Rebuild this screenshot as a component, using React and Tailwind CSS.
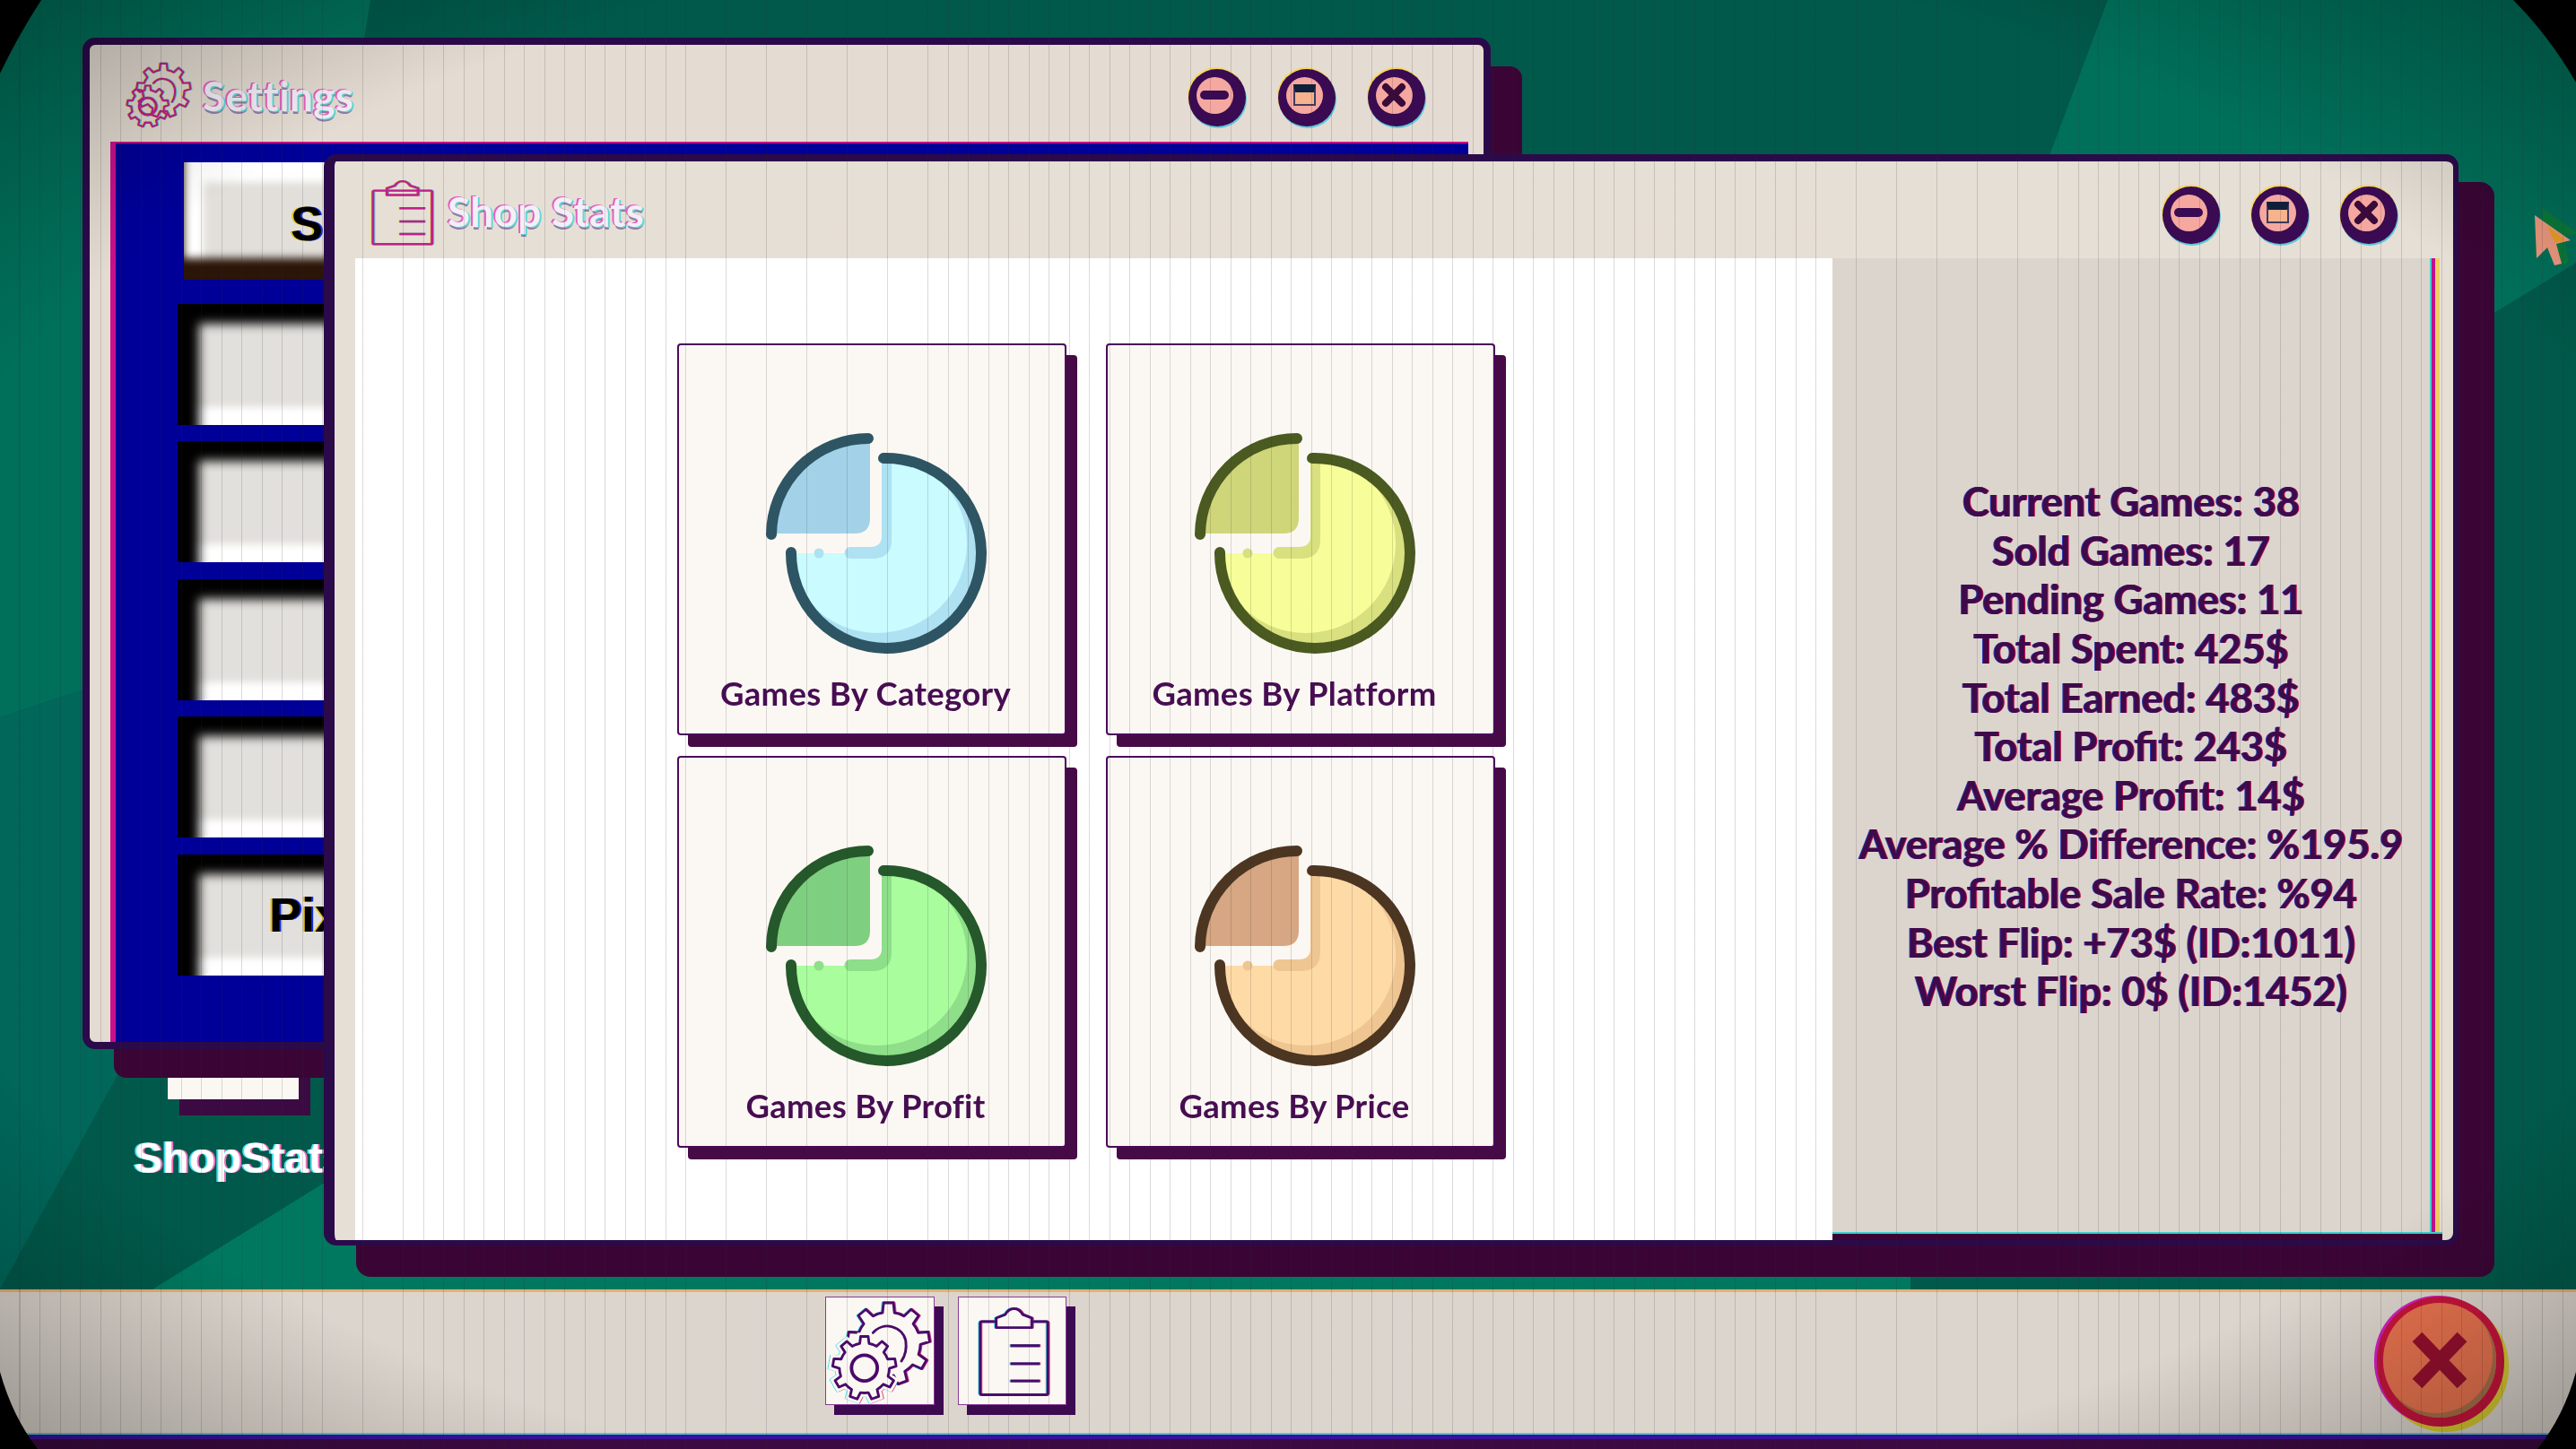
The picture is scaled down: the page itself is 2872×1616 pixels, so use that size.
const stats = [
  "Current Games: 38",
  "Sold Games: 17",
  "Pending Games: 11",
  "Total Spent: 425$",
  "Total Earned: 483$",
  "Total Profit: 243$",
  "Average Profit: 14$",
  "Average % Difference: %195.9",
  "Profitable Sale Rate: %94",
  "Best Flip: +73$ (ID:1011)",
  "Worst Flip: 0$ (ID:1452)",
];

const cards = [
  { id: "cat", label: "Games By Category", stroke: "#2e5564", light: "#c9fbff", shade: "#aee1f2", slice: "#a3d2e8" },
  { id: "plat", label: "Games By Platform", stroke: "#4a5a20", light: "#f7fd98", shade: "#d8e07f", slice: "#cfd67a" },
  { id: "prof", label: "Games By Profit", stroke: "#25582a", light: "#a9fd9d", shade: "#8ede8a", slice: "#7fcf80" },
  { id: "price", label: "Games By Price", stroke: "#4c3622", light: "#fedba6", shade: "#efc692", slice: "#d6a782" },
];

// builds the outline of a cog, used for the settings icons
const gearPath = (cx, cy, outer, inner, teeth) => {
  const pts = [];
  const step = (Math.PI * 2) / teeth;
  for (let i = 0; i < teeth; i++) {
    const a = i * step - Math.PI / 2;
    const list = [
      [inner, a - step * 0.5],
      [inner, a - step * 0.27],
      [outer, a - step * 0.17],
      [outer, a + step * 0.17],
      [inner, a + step * 0.27],
    ];
    list.forEach(([r, t]) => pts.push(`${(cx + r * Math.cos(t)).toFixed(1)} ${(cy + r * Math.sin(t)).toFixed(1)}`));
  }
  return `M${pts.join(" L")} Z`;
};

const PieIcon = ({ id, stroke, light, shade, slice }) => (
  <svg viewBox="0 0 260 260" className="w-[260px] h-[260px] ml-[16px] shrink-0">
    <defs>
      <clipPath id={`sector-${id}`}>
        <path d="M133 31 A106 106 0 1 1 32 137 L133 137 Z" />
      </clipPath>
    </defs>
    <path d="M120 11 V98 Q120 115 103 115 H12 A106 106 0 0 1 120 11 Z" fill={slice} />
    <g clipPath={`url(#sector-${id})`}>
      <circle cx="138" cy="136" r="106" fill={shade} />
      <circle cx="128" cy="126" r="100" fill={light} />
    </g>
    <path d="M133 33 L144 33 V122 Q144 143 122 143 H98 A6.5 6.5 0 0 1 98 130 H120 Q133 130 133 118 Z" fill={shade} />
    <circle cx="63" cy="137" r="5.5" fill={shade} />
    <path d="M135 31 A106 106 0 1 1 32 136" fill="none" stroke={stroke} strokeWidth="12" strokeLinecap="round" />
    <path d="M118 9 A108 108 0 0 0 10 116" fill="none" stroke={stroke} strokeWidth="12" strokeLinecap="round" />
  </svg>
);

const GearIcon = ({ className, stroke = "#4a0a6a", width = 3, fill = "#fbf8f3" }) => (
  <svg viewBox="0 0 120 124" className={className} fill="none">
    <path d={gearPath(70, 54, 48, 37, 9)} stroke={stroke} strokeWidth={width} strokeLinejoin="round" fill={fill} />
    <path d="M52 41 A22 22 0 0 1 90 50 Q92 64 85 74" stroke={stroke} strokeWidth={width} strokeLinecap="round" />
    <path d={gearPath(42, 82, 37, 29, 9)} fill={fill} stroke={fill} strokeWidth="9" />
    <path d={gearPath(42, 82, 37, 29, 9)} stroke={stroke} strokeWidth={width} strokeLinejoin="round" fill={fill} />
    <circle cx="42" cy="82" r="15" stroke={stroke} strokeWidth={width + 1} />
  </svg>
);

const ClipboardIcon = ({ className, stroke = "#4a0a6a", width = 3, fill = "#fbf8f3" }) => (
  <svg
    viewBox="0 0 120 124"
    preserveAspectRatio="none"
    className={className}
    fill="none"
    stroke={stroke}
    strokeWidth={width}
    strokeLinejoin="round"
  >
    <rect x="24" y="28" width="76" height="85" rx="2" />
    <path d="M42 35 V24 L52 20 Q56 13 62 13 Q68 13 72 20 L82 24 V35 Z" fill={fill} />
    <path d="M58 56 H91 M58 77 H91 M58 97 H91" />
  </svg>
);

const WinButton = ({ kind }) => (
  <div className="w-[64px] h-[64px] rounded-full bg-[#3a0a52] flex items-center justify-center pr-[6px] pb-[6px] shadow-[-1px_-2px_0_#f5d860,1px_2px_0_#5fc8d8]">
    <div className="w-[41px] h-[41px] rounded-full bg-[#f5a8a0] flex items-center justify-center">
      {kind === "min" && <div className="w-[32px] h-[10px] rounded-full bg-[#3a0a52]" />}
      {kind === "max" && (
        <div className="w-[25px] h-[24px] border-2 border-[#3f3a60] border-t-[9px] border-t-[#10203a] bg-[#f7b28e]" />
      )}
      {kind === "close" && (
        <svg viewBox="0 0 30 30" className="w-[30px] h-[30px]">
          <path d="M6 6 L24 24 M24 6 L6 24" stroke="#3a0a3a" strokeWidth="8" strokeLinecap="round" />
        </svg>
      )}
    </div>
  </div>
);

const titleText =
  "text-[46px] tracking-[0.3px] font-bold leading-none text-[#f4eff6] [text-shadow:-2px_-1px_0_#e35fc0,2px_1px_0_#62d8d8,1px_3px_0_#8d7fa8]";

const font = "font-['Lato','Liberation_Sans',sans-serif]";

const SettingsRow = ({ text, selected }) => (
  <div
    className={
      selected
        ? "h-[131px] ml-[7px] mb-[8px] shrink-0 bg-[#e2dfda] flex items-center pl-[119px] pt-[5px] shadow-[inset_0_-24px_10px_#2a1508,inset_22px_22px_10px_#ffffff]"
        : "h-[135px] shrink-0 bg-[#e2e0dc] flex items-center pl-[102px] shadow-[inset_24px_22px_12px_#000000,inset_0_-20px_8px_#ffffff]"
    }
  >
    <span className="text-[54px] font-bold leading-none text-black font-['Liberation_Sans',sans-serif] [text-shadow:-2px_0_0_#e8c020,2px_0_0_#1030e0]">
      {text}
    </span>
  </div>
);

const App = () => {
  return (
    <div className={`relative w-[2872px] h-[1616px] overflow-hidden flex flex-col justify-end bg-[#00594a] blur-[0.7px] ${font}`}>
      {/* wallpaper */}
      <svg viewBox="0 0 2872 1616" className="absolute inset-0 w-full h-full">
        <polygon points="0,0 413,0 300,700 0,800" fill="#00705a" />
        <polygon points="0,800 300,700 240,1000 0,1438" fill="#00675a" />
        <polygon points="360,1320 170,1438 2130,1438 2130,1300" fill="#00785f" />
        <polygon points="2350,0 2872,0 2872,293 2779,350 2200,400" fill="#00705a" />
      </svg>

      {/* desktop shortcut behind the windows */}
      <div className="absolute left-[122px] top-[1080px] w-[276px] flex flex-col items-center">
        <div className="w-[146px] h-[146px] bg-[#fbf8f3] shadow-[13px_18px_0_#3c0a42]" />
        <div className="mt-[42px] ml-[16px] text-[48px] font-bold leading-none text-white font-['Liberation_Sans',sans-serif] [text-shadow:-2px_0_0_#40e0f0,2px_0_0_#f070c0]">
          ShopStats
        </div>
      </div>

      {/* settings window */}
      <div className="absolute left-[92px] top-[42px] w-[1570px] h-[1128px] flex flex-col rounded-[14px] border-[8px] border-[#2b0a4a] bg-[#e4dcd2] shadow-[35px_32px_0_#3a0535]">
        <div className="h-[108px] shrink-0 flex items-center pl-[38px] pr-[65px]">
          <GearIcon
            className="w-[76px] h-[78px] mt-[4px] shrink-0 [filter:drop-shadow(-1px_0_0_#e8d860)_drop-shadow(1px_0_0_#50d0d8)]"
            stroke="#c0208c"
            width={3.5}
            fill="none"
          />
          <span className={`ml-[12px] mt-[6px] ${titleText}`}>Settings</span>
          <div className="ml-auto mt-[10px] flex gap-[36px]">
            <WinButton kind="min" />
            <WinButton kind="max" />
            <WinButton kind="close" />
          </div>
        </div>
        <div className="flex-1 ml-[23px] mr-[17px] border-l-[6px] border-t-[2px] border-[#c8108c] bg-[#000098] pt-[21px] pl-[69px] flex flex-col gap-[18.5px] overflow-hidden">
          <SettingsRow text="S" selected />
          <SettingsRow text="" />
          <SettingsRow text="" />
          <SettingsRow text="" />
          <SettingsRow text="" />
          <SettingsRow text="Pix" />
        </div>
      </div>

      {/* shop stats window */}
      <div className="absolute left-[361px] top-[172px] w-[2380px] h-[1217px] flex flex-col rounded-[14px] border-[6px] border-l-[12px] border-t-[8px] border-[#2b0a4a] bg-[#e6dfd5] shadow-[38px_33px_0_2px_#3a0535]">
        <div className="h-[108px] shrink-0 flex items-center pl-[22px] pr-[62px]">
          <ClipboardIcon
            className="w-[104px] h-[87px] mt-[5px] shrink-0 [filter:drop-shadow(-1px_0_0_#e8d860)_drop-shadow(1px_0_0_#50d0d8)]"
            stroke="#c0208c"
            width={3.5}
            fill="none"
          />
          <span className={`mt-[4px] ${titleText}`}>Shop Stats</span>
          <div className="ml-auto mt-[12px] flex gap-[35px]">
            <WinButton kind="min" />
            <WinButton kind="max" />
            <WinButton kind="close" />
          </div>
        </div>
        <div className="flex-1 min-h-0 flex pl-[23px] pr-[26px]">
          <div className="w-[1647px] shrink-0 bg-white pl-[359px] pt-[95px]">
            <div className="grid grid-cols-[434px_434px] gap-x-[44px] gap-y-[23px]">
              {cards.map((c) => (
                <div
                  key={c.id}
                  className="h-[437px] rounded-[4px] border-2 border-[#4a0a5a] bg-[#fbf8f3] shadow-[12px_13px_0_#460a46] flex flex-col items-center pt-[95px]"
                >
                  <PieIcon {...c} />
                  <div className="mt-[15px] mr-[14px] text-[36.5px] font-bold leading-none text-[#470d52] tracking-[0.3px] whitespace-nowrap">
                    {c.label}
                  </div>
                </div>
              ))}
            </div>
          </div>
          <div className="flex-1 flex flex-col">
            <div className="flex-1 flex flex-col items-center justify-center pt-[4px] bg-[#dcd5cd] shadow-[2px_0_0_#3fcfcf,6px_0_0_#c0108c,11px_0_0_#eed060]">
              {stats.map((line) => (
                <div
                  key={line}
                  className="h-[54.6px] flex items-center text-[45px] font-bold text-[#3f0a4a] whitespace-nowrap [text-shadow:-1px_0_0_#2a3ab0,1px_0_0_#c01050]"
                >
                  {line}
                </div>
              ))}
            </div>
            <div className="h-[9px] -mr-[14px] shrink-0 bg-[#3a0535] border-t-2 border-[#3fcfcf]" />
          </div>
        </div>
      </div>

      {/* taskbar */}
      <div className="relative h-[178px] shrink-0 flex items-start bg-[#dcd5cd] border-t-[3px] border-[#e8b070] pt-[5px] pl-[920px] pr-[80px]">
        <div className="flex gap-[26px]">
          <div className="w-[122px] h-[121px] bg-[#fbf8f3] border border-[#8a3a9a] shadow-[10px_11px_0_#3c0a50]">
            <GearIcon
              className="w-[120px] h-[119px] [filter:drop-shadow(-1px_0_0_#50e0e8)_drop-shadow(1px_0_0_#e04080)]"
            />
          </div>
          <div className="w-[121px] h-[121px] bg-[#fbf8f3] border border-[#8a3a9a] shadow-[10px_11px_0_#3c0a50]">
            <ClipboardIcon
              className="w-[119px] h-[119px] [filter:drop-shadow(-1px_0_0_#50e0e8)_drop-shadow(1px_0_0_#e04080)]"
            />
          </div>
        </div>
        <div className="ml-auto w-[142px] h-[145px] rounded-full bg-[#c8143c] flex items-center justify-center shadow-[-3px_-1px_0_#d020c0,5px_6px_0_#d8cc30]">
          <div className="w-[126px] h-[128px] -mt-[4px] -ml-[2px] rounded-full bg-[#e8734f] flex items-center justify-center shadow-[inset_-4px_-5px_0_#a87048]">
            <svg viewBox="0 0 70 72" className="w-[70px] h-[72px]">
              <path d="M10 10 L60 62 M60 10 L10 62" stroke="#960f2e" strokeWidth="15" />
            </svg>
          </div>
        </div>
        <div className="absolute left-0 right-0 bottom-0 h-[18px] bg-[#3c0a42] border-t-[2px] border-[#58c8c8]">
          <div className="h-[5px] bg-[#3a10a0]" />
        </div>
      </div>

      {/* mouse cursor */}
      <svg viewBox="0 0 50 70" className="absolute left-[2824px] top-[230px] w-[50px] h-[70px]">
        <polygon points="10,2 50,30 34,34 40,62 32,66 24,40 12,52" fill="#0a7a3a" />
        <polygon points="2,10 42,38 26,42 32,64 24,66 16,46 4,58" fill="#ee9a80" />
        <polygon points="16,22 36,38 24,40" fill="#eda020" />
      </svg>

      {/* crt scanlines, vignette and rounded screen corners */}
      <div className="absolute inset-0 pointer-events-none bg-[repeating-linear-gradient(90deg,transparent_0,transparent_21.5px,rgba(50,40,50,0.17)_21.5px,rgba(50,40,50,0.17)_22.5px)]" />
      <div className="absolute inset-0 pointer-events-none bg-[radial-gradient(ellipse_at_center,transparent_78%,rgba(0,0,0,0.3)_100%)]" />
      <svg viewBox="0 0 2872 1616" className="absolute inset-0 w-full h-full pointer-events-none">
        <path d="M0 0 H46 Q20 40 0 82 Z" fill="#000" />
        <path d="M2872 0 H2802 Q2842 40 2872 92 Z" fill="#000" />
        <path d="M0 1616 H42 Q14 1580 0 1530 Z" fill="#000" />
        <path d="M2872 1616 H2829 Q2858 1580 2872 1530 Z" fill="#000" />
      </svg>
    </div>
  );
};

export default App;
